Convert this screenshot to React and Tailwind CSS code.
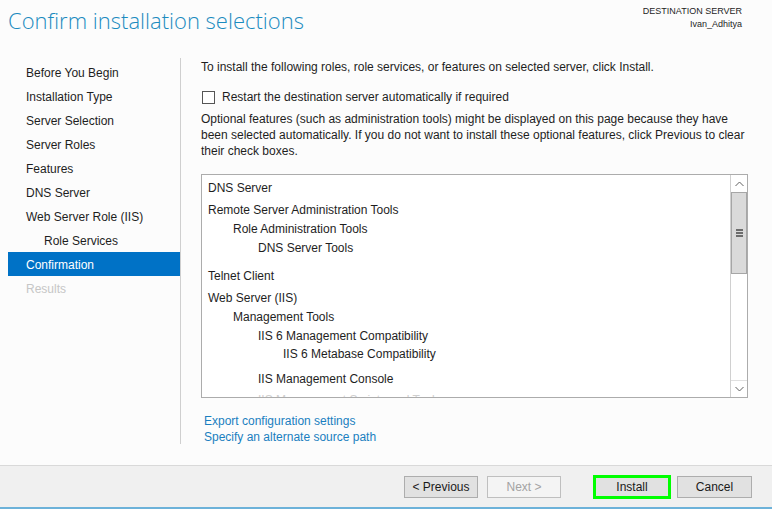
const navItems = [
  { label: "Before You Begin" },
  { label: "Installation Type" },
  { label: "Server Selection" },
  { label: "Server Roles" },
  { label: "Features" },
  { label: "DNS Server" },
  { label: "Web Server Role (IIS)" },
  { label: "Role Services", indent: true },
  { label: "Confirmation", active: true },
  { label: "Results", disabled: true },
];

const features = [
  { label: "DNS Server", level: 0, gap: "" },
  { label: "Remote Server Administration Tools", level: 0, gap: "mt-[3px]" },
  { label: "Role Administration Tools", level: 1, gap: "" },
  { label: "DNS Server Tools", level: 2, gap: "" },
  { label: "Telnet Client", level: 0, gap: "mt-[9px]" },
  { label: "Web Server (IIS)", level: 0, gap: "mt-[3px]" },
  { label: "Management Tools", level: 1, gap: "" },
  { label: "IIS 6 Management Compatibility", level: 2, gap: "" },
  { label: "IIS 6 Metabase Compatibility", level: 3, gap: "mt-[-1px]" },
  { label: "IIS Management Console", level: 2, gap: "mt-[6px]" },
  { label: "IIS Management Scripts and Tools", level: 2, gap: "mt-[2px]", faded: true },
];

const indents = ["pl-[6px]", "pl-[31px]", "pl-[56px]", "pl-[81px]"];

function Chevron({ up }) {
  return (
    <svg width="9" height="6" viewBox="0 0 9 6" className="text-[#606060]">
      <path
        d={up ? "M0.5 5 L4.5 1 L8.5 5" : "M0.5 1 L4.5 5 L8.5 1"}
        fill="none"
        stroke="currentColor"
        strokeWidth="1"
      />
    </svg>
  );
}

function Button({ children, disabled, className = "" }) {
  return (
    <div
      className={
        "flex h-[22px] items-center justify-center border text-[12px] " +
        (disabled
          ? "border-[#bfbfbf] bg-[#f4f4f4] text-[#a3a3a3] "
          : "border-[#adadad] bg-[#e1e1e1] text-[#1a1a1a] ") +
        className
      }
    >
      {children}
    </div>
  );
}

export default function App() {
  return (
    <main
      className="flex h-[509px] w-[772px] flex-col overflow-hidden bg-[#fcfcfc] text-[#1e1e1e]"
      style={{ fontFamily: '"Segoe UI", "Liberation Sans", Arial, sans-serif' }}
    >
      <header className="flex h-[58px] shrink-0 justify-between">
        <h1
          className="pl-[8px] pt-[5px] text-[22px] font-light leading-[30px] text-[#1b8bbf]"
          style={{ fontFamily: '"Segoe UI", "Open Sans", sans-serif' }}
        >
          Confirm installation selections
        </h1>
        <div className="pr-[30px] pt-[5px] text-right text-[9px] leading-[13px] text-[#1e1e1e]">
          <p>DESTINATION SERVER</p>
          <p>Ivan_Adhitya</p>
        </div>
      </header>

      <div className="flex flex-1">
        <nav className="flex w-[181px] shrink-0 flex-col pb-[21px]">
          <div className="flex flex-1 flex-col border-r border-[#cfcfcf] pt-[2px]">
            {navItems.map((item) => (
              <div
                key={item.label}
                className={
                  "ml-[8px] flex h-[24px] items-center pt-[1px] text-[12px] " +
                  (item.indent ? "pl-[36px] " : "pl-[18px] ") +
                  (item.active
                    ? "bg-[#0072c6] text-white "
                    : item.disabled
                    ? "text-[#c6c6c6] "
                    : "text-[#1e1e1e] ")
                }
              >
                {item.label}
              </div>
            ))}
          </div>
        </nav>

        <section className="flex flex-1 flex-col pl-[20px] pr-[24px] pt-[1px] text-[12px]">
          <p className="leading-[16px]">
            To install the following roles, role services, or features on selected server, click Install.
          </p>
          <label className="mt-[14px] flex h-[16px] items-center">
            <span className="ml-[1px] h-[13px] w-[13px] border border-[#555555] bg-white" />
            <span className="ml-[7px]">Restart the destination server automatically if required</span>
          </label>
          <p className="mt-[6px] leading-[16px]">
            Optional features (such as administration tools) might be displayed on this page because they have
            been selected automatically. If you do not want to install these optional features, click Previous to clear
            their check boxes.
          </p>

          <div className="mt-[15px] flex h-[224px] border border-[#acacac] bg-white">
            <div className="flex-1 overflow-hidden pt-[4px]">
              {features.map((f) => (
                <div
                  key={f.label}
                  className={
                    "h-[19px] whitespace-nowrap leading-[19px] " +
                    indents[f.level] +
                    " " +
                    f.gap +
                    (f.faded ? " text-[#cfcfcf]" : " text-[#1e1e1e]")
                  }
                >
                  {f.label}
                </div>
              ))}
            </div>
            <div className="flex w-[17px] flex-col border-l border-[#d0d0d0] bg-white">
              <div className="flex h-[17px] items-center justify-center">
                <Chevron up />
              </div>
              <div className="flex h-[82px] items-center justify-center border border-[#a6a6a6] bg-[#dadada]">
                <div className="flex flex-col gap-[1px]">
                  <span className="h-[2px] w-[7px] bg-[#6d6d6d]" />
                  <span className="h-[2px] w-[7px] bg-[#6d6d6d]" />
                  <span className="h-[2px] w-[7px] bg-[#6d6d6d]" />
                </div>
              </div>
              <div className="flex-1" />
              <div className="flex h-[17px] items-center justify-center border-t border-[#e0e0e0]">
                <Chevron />
              </div>
            </div>
          </div>

          <div className="mt-[15px] flex flex-col pl-[3px] leading-[16px] text-[#1a7fc0]">
            <span>Export configuration settings</span>
            <span>Specify an alternate source path</span>
          </div>
        </section>
      </div>

      <footer className="flex h-[42px] shrink-0 items-center border-t border-[#d9d9d9] bg-[#f0f0f0] pl-[404px]">
        <Button className="w-[74px]">&lt; Previous</Button>
        <Button disabled className="ml-[9px] w-[74px]">
          Next &gt;
        </Button>
        <div className="ml-[32px] border-[3px] border-[#00ff00]">
          <div className="flex h-[18px] w-[72px] items-center justify-center bg-[#e1e1e1] text-[12px] text-[#1a1a1a]">
            Install
          </div>
        </div>
        <Button className="ml-[6px] w-[75px]">Cancel</Button>
      </footer>
      <div className="h-[2px] shrink-0 bg-[#6db2d9]" />
    </main>
  );
}
